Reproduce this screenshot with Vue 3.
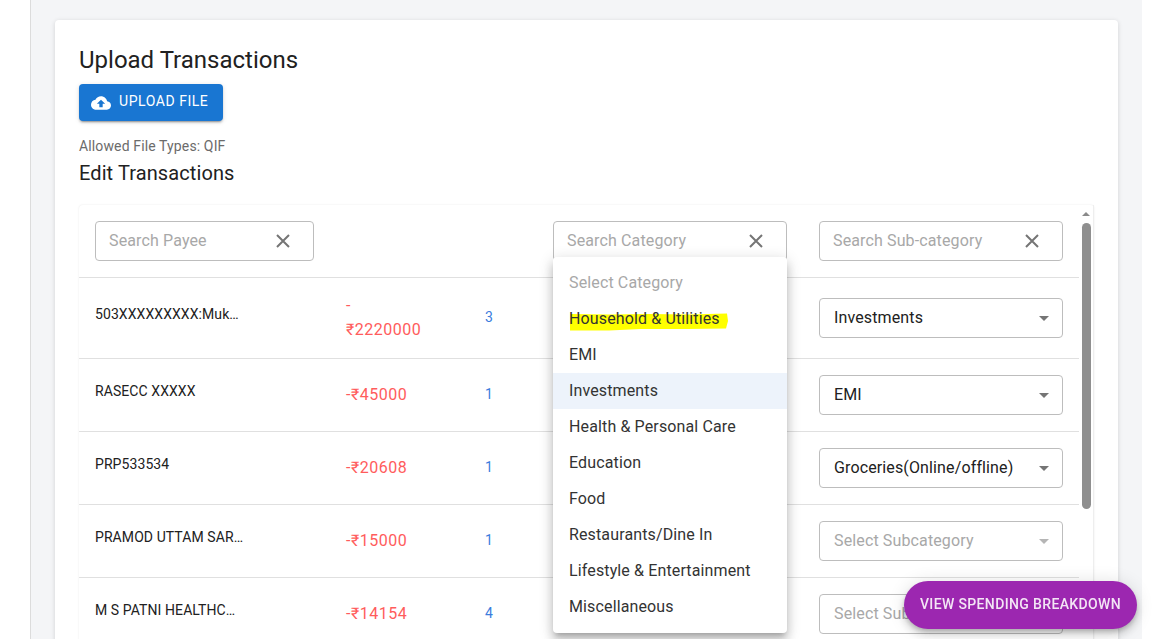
<script setup>
const rows = [
  { name: '503XXXXXXXXX:Muk…', amount: '-₹2220000', count: 3, sub: 'Investments' },
  { name: 'RASECC XXXXX', amount: '-₹45000', count: 1, sub: 'EMI' },
  { name: 'PRP533534', amount: '-₹20608', count: 1, sub: 'Groceries(Online/offline)' },
  { name: 'PRAMOD UTTAM SAR…', amount: '-₹15000', count: 1, sub: '' },
  { name: 'M S PATNI HEALTHC…', amount: '-₹14154', count: 4, sub: '' },
]
const options = [
  'Household & Utilities', 'EMI', 'Investments', 'Health & Personal Care', 'Education',
  'Food', 'Restaurants/Dine In', 'Lifestyle & Entertainment', 'Miscellaneous',
]
</script>

<template>
  <div class="page">
    <div class="gutter"></div>
    <main class="main">
      <section class="card">
        <h1 class="title">Upload Transactions</h1>
        <button class="upload" type="button">
          <svg class="upload-icon" viewBox="0 0 24 24" aria-hidden="true">
            <path fill="currentColor" d="M19.35 10.04C18.67 6.59 15.64 4 12 4 9.11 4 6.6 5.64 5.35 8.04 2.34 8.36 0 10.91 0 14c0 3.31 2.69 6 6 6h13c2.76 0 5-2.24 5-5 0-2.64-2.05-4.78-4.65-4.96zM14 13v4h-4v-4H7l5-5 5 5h-3z"/>
          </svg>
          <span class="upload-label">UPLOAD FILE</span>
        </button>
        <p class="hint">Allowed File Types: QIF</p>
        <h2 class="subtitle">Edit Transactions</h2>

        <div class="table">
          <div class="rows">
            <div class="row head">
              <div class="search payee">
                <span>Search Payee</span>
                <svg class="clear" viewBox="0 0 14 14"><path d="M1 1l12 12M13 1L1 13"/></svg>
              </div>
              <div></div>
              <div></div>
              <div class="search cat">
                <span>Search Category</span>
                <svg class="clear" viewBox="0 0 14 14"><path d="M1 1l12 12M13 1L1 13"/></svg>
              </div>
              <div class="search sub">
                <span>Search Sub-category</span>
                <svg class="clear" viewBox="0 0 14 14"><path d="M1 1l12 12M13 1L1 13"/></svg>
              </div>
            </div>
            <div v-for="r in rows" :key="r.name" class="row">
              <div class="name">{{ r.name }}</div>
              <div class="amount">{{ r.amount }}</div>
              <div class="count">{{ r.count }}</div>
              <div></div>
              <div class="select" :class="{ empty: !r.sub }">
                <span>{{ r.sub || 'Select Subcategory' }}</span>
                <i class="caret"></i>
              </div>
            </div>
          </div>
          <div class="scrollbar">
            <i class="arrow"></i>
            <div class="thumb"></div>
          </div>

          <ul class="menu">
            <li class="opt muted">Select Category</li>
            <li
              v-for="(o, i) in options"
              :key="o"
              class="opt"
              :class="{ active: o === 'Investments' }"
            >
              <svg v-if="i === 0" class="marker" viewBox="0 0 160 18" aria-hidden="true">
                <path fill="#ffff00" d="M1 1 L40 1.500 L80 1 L120 1.500 L158 0.500 L159 8 L157 15.500 L118 16 L72 16 L40 17.500 L1 17.500 Z"/>
              </svg>
              <span class="opt-text">{{ o }}</span>
            </li>
          </ul>
        </div>
      </section>
    </main>
    <button class="fab" type="button">VIEW SPENDING BREAKDOWN</button>
  </div>
</template>

<style>
html, body { margin: 0; height: 100%; overflow: hidden; background: #fff; }
</style>

<style scoped>
.page {
  display: flex;
  width: 1157px;
  height: 639px;
  overflow: hidden;
  font-family: Roboto, "Liberation Sans", sans-serif;
  color: #212121;
  background: #fff;
}
.gutter { width: 30px; flex: none; }
.main {
  width: 1112px;
  flex: none;
  box-sizing: border-box;
  padding: 20px 24px 0;
  background: #f4f5f7;
  border-left: 1px solid #dcdcdc;
}
.card {
  box-sizing: border-box;
  width: 1063px;
  height: 700px;
  padding: 24px;
  background: #fff;
  border-radius: 4px;
  box-shadow: 0 1px 5px rgba(0, 0, 0, .14);
}
.title {
  margin: 0;
  font-size: 24px;
  line-height: 32px;
  font-weight: 400;
}
.upload {
  display: flex;
  align-items: center;
  gap: 8px;
  width: 144px;
  height: 37px;
  margin-top: 8px;
  padding: 0 0 0 12px;
  border: 0;
  border-radius: 4px;
  background: #1976d2;
  color: #fff;
  font: 400 14px/1 Roboto, sans-serif;
  letter-spacing: .55px;
  box-shadow: 0 3px 1px -2px rgba(0,0,0,.2), 0 2px 2px rgba(0,0,0,.14), 0 1px 5px rgba(0,0,0,.12);
}
.upload-icon { width: 20px; height: 20px; }
.upload-label { margin-bottom: 3px; }
.hint {
  margin: 16px 0 0;
  font-size: 14px;
  line-height: 18px;
  letter-spacing: .13px;
  color: #6b6b6b;
}
.subtitle {
  margin: 4px 0 0;
  font-size: 20px;
  line-height: 28px;
  font-weight: 400;
  letter-spacing: .1px;
}
.table {
  position: relative;
  display: flex;
  width: 1015px;
  margin-top: 18px;
  border-radius: 4px;
  box-shadow: 0 0 2px rgba(0, 0, 0, .1);
}
.rows { width: 1000px; flex: none; }
.row {
  display: grid;
  grid-template-columns: 251px 139px 68px 266px 244px;
  align-items: center;
  padding: 16px;
  border-bottom: 1px solid #e0e0e0;
}
.name {
  font-size: 14px;
  line-height: 20px;
  padding-bottom: 8px;
  letter-spacing: .08px;
  white-space: nowrap;
}
.amount {
  width: 78px;
  font-size: 16px;
  line-height: 24px;
  letter-spacing: .5px;
  color: #ff5c5c;
}
.count {
  padding-bottom: 2px;
  font-size: 14px;
  color: #3b7ddd;
}
.search, .select {
  box-sizing: border-box;
  display: flex;
  align-items: center;
  justify-content: space-between;
  height: 40px;
  border: 1px solid #bdbdbd;
  border-radius: 4px;
  font-size: 16px;
  letter-spacing: .13px;
  background: #fff;
}
.search span, .select span { margin-bottom: 2px; }
.search { padding: 0 23px 0 13px; color: #a8a8a8; }
.search.payee { width: 219px; }
.search.cat { width: 234px; }
.search.sub { width: 244px; }
.clear {
  width: 14px;
  height: 14px;
  fill: none;
  stroke: #757575;
  stroke-width: 2;
}
.select { padding: 0 13px 0 14px; color: #212121; }
.select.empty { color: #a8a8a8; }
.caret {
  width: 0;
  height: 0;
  border: 5px solid transparent;
  border-top-color: #757575;
  border-bottom-width: 0;
}
.select.empty .caret { border-top-color: #b5b5b5; }
.scrollbar {
  position: relative;
  width: 15px;
  flex: none;
  border-right: 1px solid #eee;
  box-sizing: border-box;
}
.arrow {
  position: absolute;
  left: 3px;
  top: 7px;
  width: 0;
  height: 0;
  border: 4px solid transparent;
  border-bottom-color: #8a8a8a;
  border-top-width: 0;
}
.thumb {
  position: absolute;
  left: 3px;
  top: 18px;
  width: 9px;
  height: 286px;
  border-radius: 5px;
  background: #8f8f8f;
}
.menu {
  position: absolute;
  left: 474px;
  top: 52px;
  width: 234px;
  margin: 0;
  padding: 8px 0;
  list-style: none;
  background: #fff;
  border-radius: 4px;
  box-shadow: 0 5px 5px -3px rgba(0,0,0,.2), 0 8px 10px 1px rgba(0,0,0,.14), 0 3px 14px 2px rgba(0,0,0,.12);
}
.opt {
  position: relative;
  height: 36px;
  padding: 0 16px;
  font-size: 16px;
  line-height: 35px;
  letter-spacing: .13px;
  color: #333;
}
.opt.muted { color: #a8a8a8; }
.opt.active { background: #edf3fb; }
.opt-text { position: relative; }
.marker {
  position: absolute;
  left: 16px;
  top: 12px;
  width: 160px;
  height: 18px;
}
.fab {
  position: fixed;
  right: 20px;
  bottom: 10px;
  height: 48px;
  padding: 0 16px 2px;
  border: 0;
  border-radius: 24px;
  background: #9c27b0;
  color: #f3e5f5;
  font: 500 14px/1 Roboto, sans-serif;
  letter-spacing: .36px;
  white-space: nowrap;
  box-shadow: 0 3px 5px -1px rgba(0,0,0,.2), 0 6px 10px rgba(0,0,0,.14), 0 1px 18px rgba(0,0,0,.12);
}
</style>
